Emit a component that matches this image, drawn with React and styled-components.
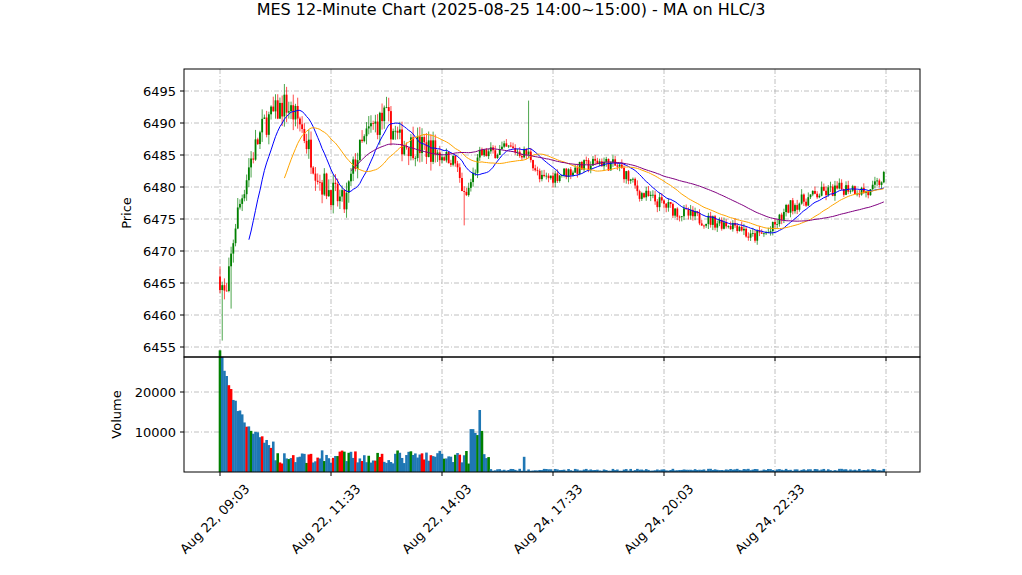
import React from "react";
import styled, { createGlobalStyle } from "styled-components";

const Global = createGlobalStyle`
  body { margin: 0; background: #fff; font-family: "DejaVu Sans", sans-serif; }
`;

const Figure = styled.div`
  width: 1022px;
  height: 575px;
  display: flex;
  flex-direction: column;
  background: #fff;
`;

const Title = styled.div`
  height: 20px;
  text-align: center;
  font-size: 16px;
  line-height: 20px;
  color: #000;
`;

const Chart = styled.svg`
  display: block;
  font-family: "DejaVu Sans", sans-serif;
`;

// chart geometry (figure coords)
const L = 184, R = 920, PT = 69, PB = 357, VB = 472;
const py = (p) => 91 + (6495 - p) * 6.4;
const vy = (v) => VB - v * 0.004;
const N = 300;
const bx = (i) => 220 + i * 2.22;

const anchors = [
  [220, 6466], [226, 6462], [235, 6474], [250, 6484], [265, 6490], [285, 6493],
  [300, 6490], [320, 6481], [345, 6477], [355, 6484], [370, 6489], [385, 6491],
  [400, 6487], [430, 6486], [455, 6484], [465, 6478], [480, 6485], [510, 6486],
  [530, 6485], [540, 6481], [560, 6482], [580, 6483], [600, 6484], [620, 6483],
  [640, 6479], [680, 6476], [700, 6475], [740, 6474], [750, 6472], [770, 6473],
  [790, 6477], [820, 6479], [850, 6480], [870, 6479], [886, 6482],
];
const target = (x) => {
  for (let k = 1; k < anchors.length; k++) {
    const [x0, y0] = anchors[k - 1], [x1, y1] = anchors[k];
    if (x <= x1) return y0 + ((y1 - y0) * (x - x0)) / (x1 - x0);
  }
  return anchors[anchors.length - 1][1];
};

let seed = 7;
const rnd = () => ((seed = (seed * 16807) % 2147483647) / 2147483647);

const bars = [];
let prev = 6466;
for (let i = 0; i < N; i++) {
  const t = target(bx(i));
  const vol = i < 100 ? 1.4 : 0.7;
  const o = prev;
  const c = t + (rnd() - 0.5) * 3 * vol;
  const h = Math.max(o, c) + rnd() * 1.2 * vol;
  const l = Math.min(o, c) - rnd() * 1.2 * vol;
  let v;
  if (i < 25) v = 26000 * Math.exp(-i / 9) + 4000 + rnd() * 2000;
  else if (i < 100) v = 2000 + rnd() * 3500;
  else if (i < 122) v = 2000 + rnd() * 4000 + (i > 112 && i < 119 ? 6000 : 0);
  else v = 300 + rnd() * 500;
  if (i === 117) v = 15500;
  if (i === 137) v = 3800;
  const r = rnd();
  const vc = i < 122 ? (r < 0.6 ? "#1f77b4" : r < 0.8 ? "green" : "red") : "#1f77b4";
  bars.push({ o, h, l, c, v, vc });
  prev = c;
}
bars[1].l = 6456; bars[5].l = 6461; bars[139].h = 6493.5; bars[110].l = 6474;

const hlc = bars.map((b) => (b.h + b.l + b.c) / 3);
const ma = (n) =>
  hlc.map((_, i) => {
    if (i < n - 1) return null;
    let s = 0;
    for (let k = i - n + 1; k <= i; k++) s += hlc[k];
    return s / n;
  });
const line = (arr) =>
  arr.map((p, i) => (p == null ? "" : `${bx(i).toFixed(1)},${py(p).toFixed(1)}`)).filter(Boolean).join(" ");

const priceTicks = [6495, 6490, 6485, 6480, 6475, 6470, 6465, 6460, 6455];
const xTicks = ["Aug 22, 09:03", "Aug 22, 11:33", "Aug 22, 14:03", "Aug 24, 17:33", "Aug 24, 20:03", "Aug 24, 22:33", ""];
const grid = { stroke: "#b0b0b0", strokeWidth: 0.8, strokeDasharray: "5 2 1 2" };

export default function App() {
  return (
    <Figure>
      <Global />
      <Title>MES 12-Minute Chart (2025-08-25 14:00~15:00) - MA on HLC/3</Title>
      <Chart width="1022" height="555" viewBox="0 20 1022 555">
        {priceTicks.map((p) => (
          <g key={p}>
            <line x1={L} x2={R} y1={py(p)} y2={py(p)} {...grid} />
            <line x1={L - 4} x2={L} y1={py(p)} y2={py(p)} stroke="#000" />
            <text x={L - 8} y={py(p) + 5} fontSize="13" textAnchor="end">{p}</text>
          </g>
        ))}
        {[20000, 10000].map((v) => (
          <g key={v}>
            <line x1={L} x2={R} y1={vy(v)} y2={vy(v)} {...grid} />
            <line x1={L - 4} x2={L} y1={vy(v)} y2={vy(v)} stroke="#000" />
            <text x={L - 8} y={vy(v) + 5} fontSize="13" textAnchor="end">{v}</text>
          </g>
        ))}
        {xTicks.map((t, k) => {
          const x = 220 + k * 111;
          return (
            <g key={k}>
              <line x1={x} x2={x} y1={PT} y2={VB} {...grid} />
              <line x1={x} x2={x} y1={VB} y2={VB + 4} stroke="#000" />
              <line x1={x} x2={x} y1={PB} y2={PB + 4} stroke="#000" />
              <text fontSize="13" textAnchor="middle" transform={`translate(${x - 2},${VB + 50}) rotate(-45)`}>{t}</text>
            </g>
          );
        })}
        {bars.map((b, i) => {
          const col = b.c >= b.o ? "green" : "red";
          const x = bx(i);
          const top = py(Math.max(b.o, b.c));
          const hgt = Math.max(0.8, Math.abs(py(b.o) - py(b.c)));
          return (
            <g key={i}>
              <line x1={x} x2={x} y1={py(b.h)} y2={py(b.l)} stroke={col} strokeWidth="0.7" />
              <rect x={x - 0.9} y={top} width="1.8" height={hgt} fill={col} />
              <rect x={x - 1.3} y={vy(b.v)} width="2.6" height={VB - vy(b.v)} fill={b.vc} />
            </g>
          );
        })}
        <polyline points={line(ma(14))} fill="none" stroke="blue" strokeWidth="1" />
        <polyline points={line(ma(30))} fill="none" stroke="orange" strokeWidth="1" />
        <polyline points={line(ma(60))} fill="none" stroke="purple" strokeWidth="1" />
        <rect x={L} y={PT} width={R - L} height={PB - PT} fill="none" stroke="#000" strokeWidth="1" />
        <rect x={L} y={PB} width={R - L} height={VB - PB} fill="none" stroke="#000" strokeWidth="1" />
        <text fontSize="13" textAnchor="middle" transform={`translate(131,${(PT + PB) / 2}) rotate(-90)`}>Price</text>
        <text fontSize="13" textAnchor="middle" transform={`translate(121,${(PB + VB) / 2}) rotate(-90)`}>Volume</text>
      </Chart>
    </Figure>
  );
}
